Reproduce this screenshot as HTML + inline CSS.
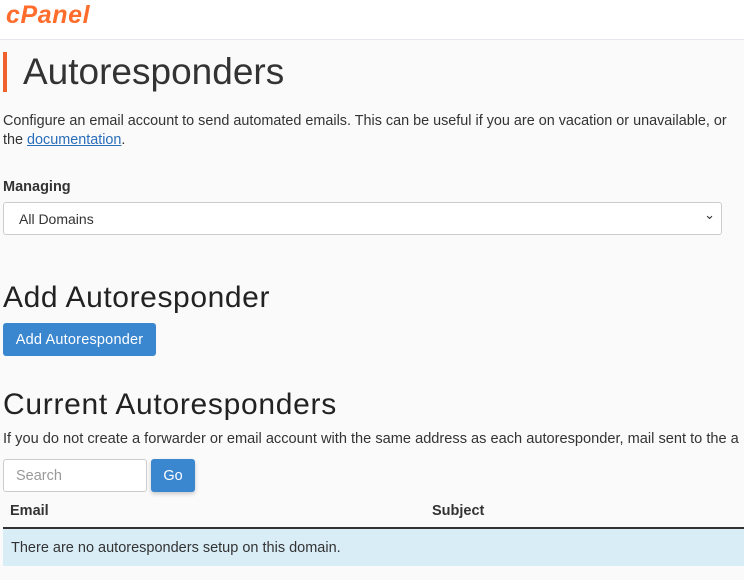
<!DOCTYPE html>
<html><head><style>
body{margin:0;width:744px;height:580px;overflow:hidden;background:#fafafa;font-family:"Liberation Sans",sans-serif;color:#333;font-size:14px}
.hdr{height:39px;background:#fff;border-bottom:1px solid #e6e6ee;position:relative}
.logo{position:absolute;left:6px;top:1px;color:#ff6c2c;font-weight:bold;font-style:italic;font-size:25px;letter-spacing:0.6px}
.a{position:absolute;white-space:nowrap}
</style></head><body>
<div class="hdr"><div class="logo">cPanel</div></div>
<div class="a" style="left:3px;top:52px;width:4px;height:40px;background:#f0622d"></div>
<div class="a" style="left:23px;top:51px;font-size:37px;font-weight:300;color:#333">Autoresponders</div>
<div class="a" style="left:3px;top:112px;font-size:14.4px;line-height:19px">Configure an email account to send automated emails. This can be useful if you are on vacation or unavailable, or<br>the <span style="color:#2a6ebb;text-decoration:underline">documentation</span>.</div>
<div class="a" style="left:3px;top:179px;font-weight:bold;font-size:14.5px">Managing</div>
<div class="a" style="left:3px;top:202px;width:717px;height:31px;border:1px solid #ccc;border-radius:3px;background:#fff"><span style="position:absolute;left:15px;top:8px;font-size:14px">All Domains</span><span style="position:absolute;right:6px;top:4px;font-size:13px">&#8964;</span></div>
<div class="a" style="left:3px;top:281px;font-size:30px;letter-spacing:0.6px;color:#222">Add Autoresponder</div>
<div class="a" style="left:3px;top:323px;width:153px;height:33px;background:#3a87d0;border-radius:3px;color:#fff;text-align:center;line-height:34px;font-size:14.5px;letter-spacing:0.2px">Add Autoresponder</div>
<div class="a" style="left:3px;top:388px;font-size:30px;letter-spacing:0.7px;color:#222">Current Autoresponders</div>
<div class="a" style="left:3px;top:431px;font-size:14.6px">If you do not create a forwarder or email account with the same address as each autoresponder, mail sent to the a</div>
<div class="a" style="left:3px;top:459px;width:142px;height:31px;border:1px solid #ccc;border-radius:3px;background:#fff"><span style="position:absolute;left:12px;top:8px;color:#999;font-size:14.5px">Search</span></div>
<div class="a" style="left:151px;top:459px;width:44px;height:33px;background:#3a87d0;border-radius:3px;color:#fff;text-align:center;line-height:34px;box-shadow:0 2px 4px rgba(0,0,0,.2);font-size:14.5px">Go</div>
<div class="a" style="left:10px;top:503px;font-weight:bold;font-size:14.5px">Email</div>
<div class="a" style="left:432px;top:503px;font-weight:bold;font-size:14.5px">Subject</div>
<div class="a" style="left:3px;top:527px;width:741px;height:2px;background:#333"></div>
<div class="a" style="left:3px;top:529px;width:741px;height:37px;background:#d9edf7"><span style="position:absolute;left:8px;top:11px;font-size:14.5px">There are no autoresponders setup on this domain.</span></div>
</body></html>
